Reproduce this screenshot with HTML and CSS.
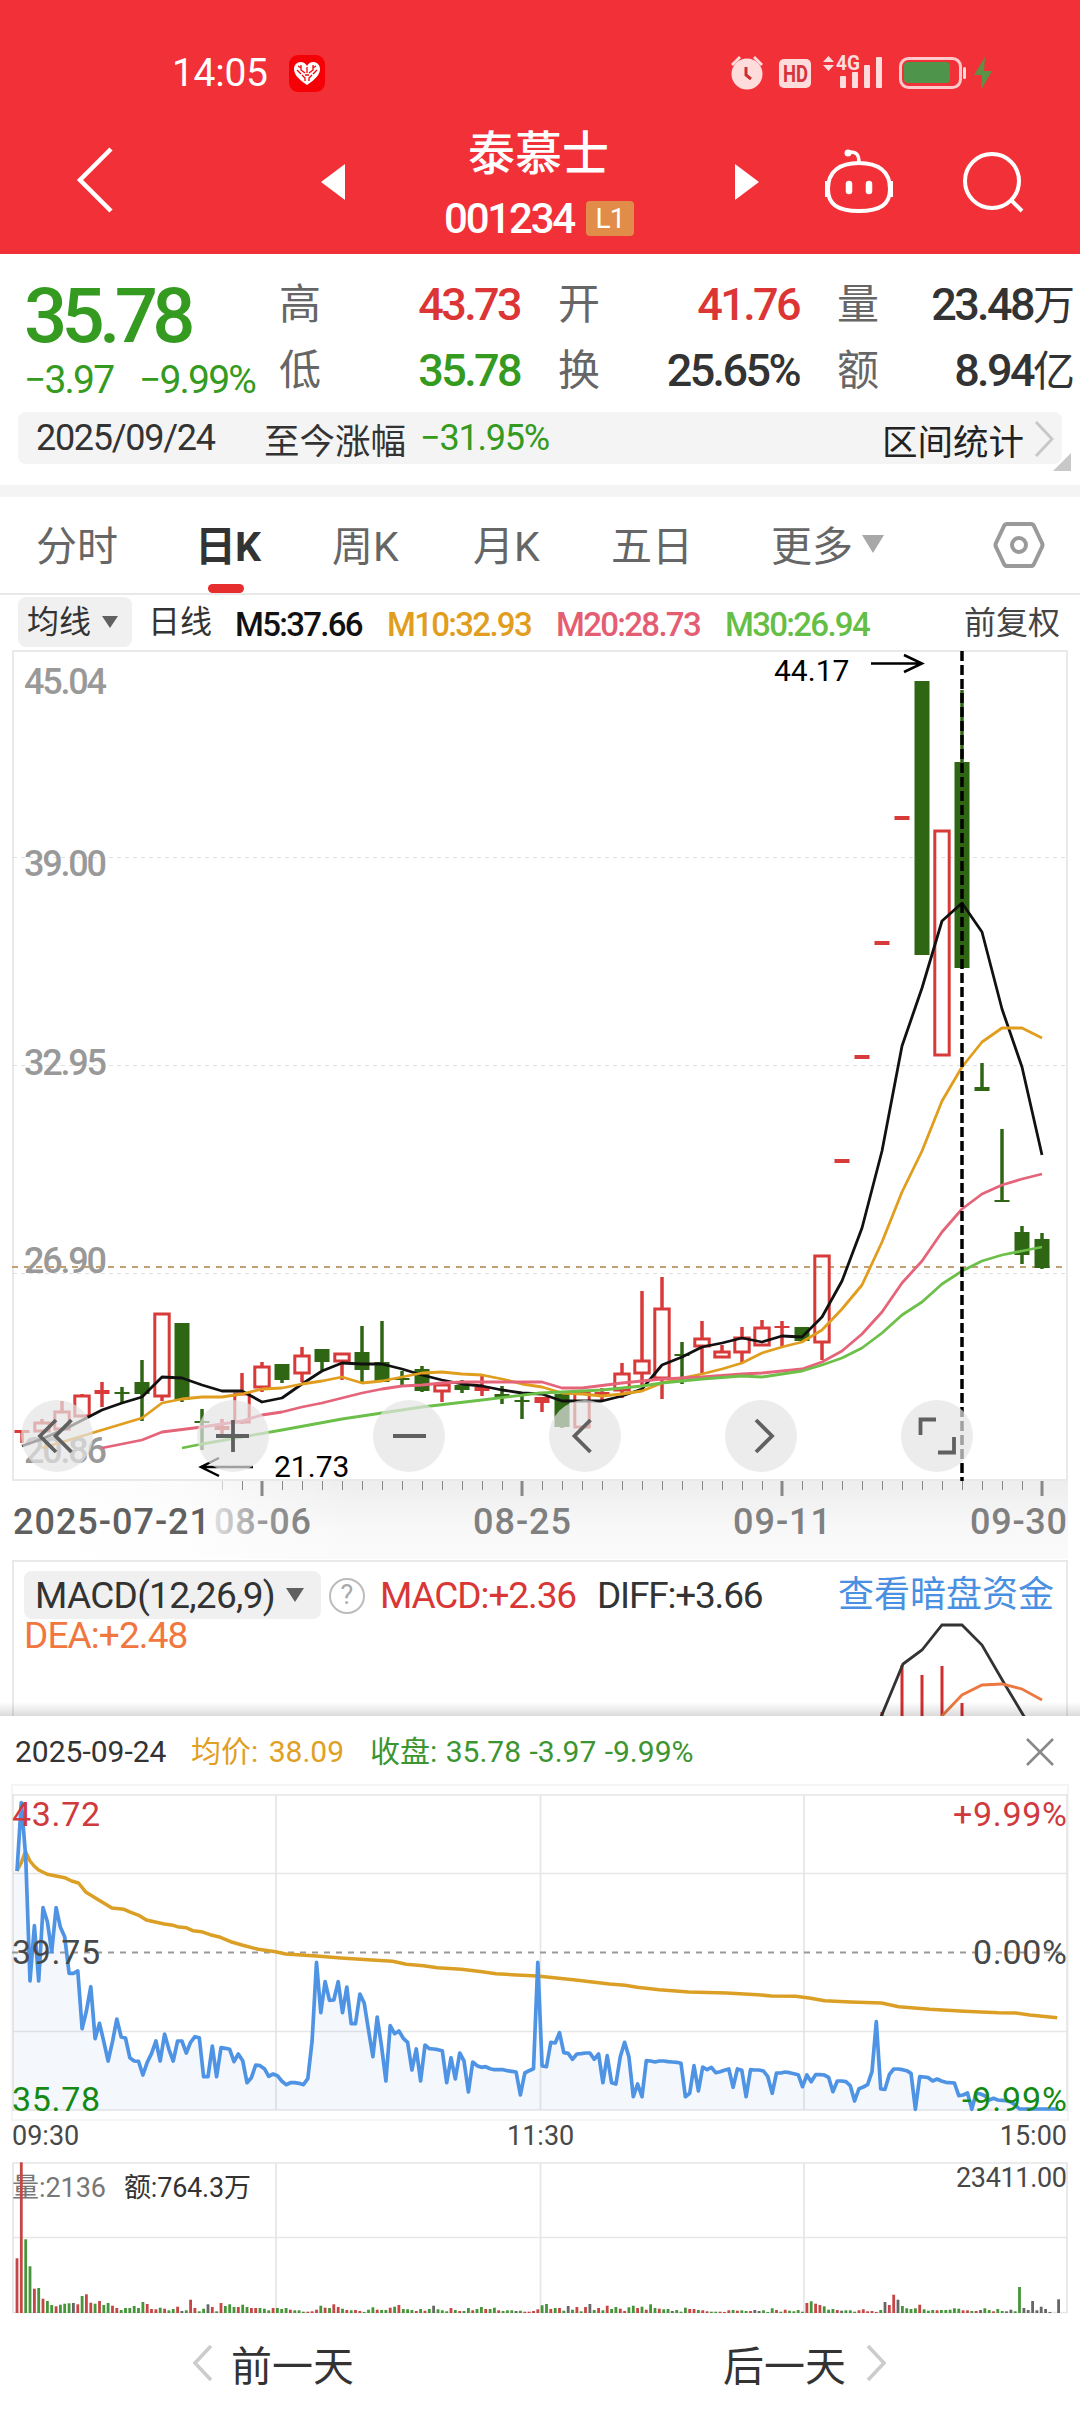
FILE: index.html
```html
<!DOCTYPE html>
<html lang="zh-CN">
<head>
    <meta charset="utf-8">
    <title>泰慕士 001234</title>
    <link rel="stylesheet" href="styles.css">
</head>
<body>
    <header class="header">
        <div class="status">
            <span class="clock">14:05</span>
            <svg class="app-icon" width="36" height="37" viewBox="0 0 36 37">
                <rect width="36" height="37" rx="9" fill="#f60008"/>
                <path d="M18 30C9 24 5 19 5 14c0-4 3-7 6.500-7 3 0 5 1.500 6.500 4 1.500-2.500 3.500-4 6.500-4C28 7 31 10 31 14c0 5-4 10-13 16z" fill="#fff"/>
                <path d="M18 12v6M12 10v5l4 3M24 10v5l-4 3M8 15l4 4M28 15l-4 4M13 20l3 3v3M23 20l-3 3v3M16 20h4M9 11l3 2M27 11l-3 2" stroke="#f60008" stroke-width="1.300" fill="none"/>
            </svg>
            <svg class="status-icons" width="270" height="40" viewBox="728 54 270 40">
                <g fill="#ffdcdc">
                    <circle cx="747" cy="75" r="15.500"/>
                    <path d="M731 65l8-8 2 2-8 8zM763 65l-8-8-2 2 8 8z"/>
                    <rect x="779" y="60" width="32" height="29" rx="5"/>
                    <path d="M823 63l5.500-6 5.500 6zM823 66l5.500 6 5.500-6z"/>
                    <rect x="840" y="77" width="6" height="12" rx="1"/>
                    <rect x="852" y="73" width="6" height="16" rx="1"/>
                    <rect x="864" y="66" width="6" height="23" rx="1"/>
                    <rect x="876" y="58" width="6" height="31" rx="1"/>
                    <rect x="963" y="68" width="3" height="12" rx="1.500"/>
                    <text x="836" y="71" font-size="20" font-weight="700" textLength="24" lengthAdjust="spacingAndGlyphs">4G</text>
                </g>
                <path d="M746 68v8l5 4" stroke="#c9302f" stroke-width="3" fill="none"/>
                <text x="783" y="83" font-size="23" font-weight="700" fill="#d5343a" textLength="25" lengthAdjust="spacingAndGlyphs">HD</text>
                <rect x="900.500" y="59.500" width="60" height="29" rx="8" fill="none" stroke="#ffc9cb" stroke-width="3"/>
                <rect x="904" y="63" width="46" height="21" rx="4" fill="#4e944a"/>
                <path d="M985 58l-11 18h8l-1 15 11-19h-8z" fill="#5f9048"/>
            </svg>
        </div>
        <div class="title-bar">
            <svg class="back" width="40" height="70" viewBox="0 0 40 70"><path d="M36 4L5 35l31 31" fill="none" stroke="#fff" stroke-width="4.500"/></svg>
            <svg class="prev" width="24" height="36" viewBox="0 0 24 36"><path d="M0 18L24 0v36z" fill="#fff"/></svg>
            <div class="stock">
                <div class="stock-name">泰慕士</div>
                <div class="stock-code"><span>001234</span><i class="level">L1</i></div>
            </div>
            <svg class="next" width="24" height="36" viewBox="0 0 24 36"><path d="M24 18L0 0v36z" fill="#fff"/></svg>
            <svg class="robot" width="76" height="68" viewBox="823 150 76 68" fill="none" stroke="#fff" stroke-width="4">
                <path d="M861 166c19 0 31 8 31 26 0 15-9 22-31 22s-31-7-31-22c0-18 12-26 31-26z"/>
                <path d="M861 166c0-8-2-11-9-11" stroke-width="3.500"/>
                <circle cx="850" cy="156" r="3.500" fill="#fff" stroke="none"/>
                <path d="M828.500 184v16M893.500 184v16" stroke-width="3"/>
                <path d="M851 187v7M871 187v7" stroke-width="6.500" stroke-linecap="round"/>
            </svg>
            <svg class="search" width="64" height="64" viewBox="964 152 64 64" fill="none" stroke="#fff" stroke-width="4">
                <circle cx="994" cy="184" r="27"/><path d="M1013 203l11 11"/>
            </svg>
        </div>
    </header>

    <section class="quote">
        <div class="quote-main">
            <div class="price">35.78</div>
            <div class="change"><span>−3.97</span><span>−9.99%</span></div>
        </div>
        <dl class="grid">
            <dt>高</dt><dd class="up">43.73</dd><dt>开</dt><dd class="up">41.76</dd><dt>量</dt><dd class="wide">23.48<b>万</b></dd>
            <dt>低</dt><dd class="down">35.78</dd><dt>换</dt><dd>25.65%</dd><dt>额</dt><dd class="wide">8.94<b>亿</b></dd>
        </dl>
    </section>

    <section class="range">
        <span class="range-date">2025/09/24</span>
        <span class="range-label">至今涨幅</span>
        <span class="range-value">−31.95%</span>
        <span class="range-link">区间统计</span>
        <svg width="20" height="38" viewBox="0 0 20 38"><path d="M2 2l16 17L2 36" fill="none" stroke="#c8c8c8" stroke-width="3"/></svg>
        <i class="corner"></i>
    </section>

    <nav class="tabs">
        <span class="tab t1">分时</span>
        <span class="tab t2 active">日K</span>
        <span class="tab t3">周K</span>
        <span class="tab t4">月K</span>
        <span class="tab t5">五日</span>
        <span class="tab t6">更多<i class="caret"></i></span>
        <svg class="setting" width="52" height="48" viewBox="0 0 52 48" fill="none" stroke="#9a9a9a" stroke-width="4">
            <path d="M14 3h24q2 0 3 2l8 17q1 2 0 4l-8 17q-1 2-3 2H14q-2 0-3-2L3 26q-1-2 0-4l8-17q1-2 3-2z"/><circle cx="26" cy="24" r="7"/>
        </svg>
    </nav>

    <div class="ma-row">
        <span class="select ma-select">均线<i class="caret dark"></i></span>
        <span class="ma-day">日线</span>
        <span class="ma m5">M5:37.66</span>
        <span class="ma m10">M10:32.93</span>
        <span class="ma m20">M20:28.73</span>
        <span class="ma m30">M30:26.94</span>
        <span class="adjust">前复权</span>
    </div>

    <svg class="kline" width="1080" height="910" viewBox="0 650 1080 910">
        <defs>
            <linearGradient id="strip" x1="0" y1="0" x2="0" y2="1">
                <stop offset="0" stop-color="#ededed"/><stop offset=".6" stop-color="#f8f8f8"/><stop offset="1" stop-color="#fafafa"/>
            </linearGradient>
            <linearGradient id="stripLeft" x1="0" y1="0" x2="1" y2="0">
                <stop offset="0" stop-color="#fff"/><stop offset=".5" stop-color="#fff" stop-opacity=".8"/><stop offset="1" stop-color="#fff" stop-opacity="0"/>
            </linearGradient>
            <linearGradient id="fade" x1="0" y1="0" x2="1" y2="0">
                <stop offset="0" stop-color="#e0e0e0"/><stop offset=".5" stop-color="#999"/><stop offset="1" stop-color="#808080"/>
            </linearGradient>
        </defs>
        <rect x="12" y="1481" width="1056" height="78" fill="url(#strip)"/>
        <rect x="12" y="1481" width="340" height="78" fill="url(#stripLeft)"/>
        <rect x="13" y="651" width="1054" height="829" fill="none" stroke="#e9e9e9" stroke-width="2"/>
        <path d="M13 857.500H1067M13 1065.500H1067M13 1273.500H1067" stroke="#e0e0e0" stroke-dasharray="4 4"/>
        <g class="axis">
            <text x="24" y="694" textLength="83">45.04</text>
            <text x="24" y="876" textLength="83">39.00</text>
            <text x="24" y="1075" textLength="83">32.95</text>
            <text x="24" y="1273" textLength="83">26.90</text>
            <text x="24" y="1463" textLength="83">20.86</text>
        </g>
        <path d="M12 1267H1068" stroke="#c2a074" stroke-width="2" stroke-dasharray="6 6"/>
        <g id="candles"></g>
        <g fill="none" stroke-width="2.800" stroke-linejoin="round">
            <polyline stroke="#111" points="22,1446 42,1439 69,1427 102,1410 122,1403 142,1397 162,1377 182,1378 202,1385 222,1391 242,1391 262,1402 282,1398 302,1384 322,1371 342,1363 362,1364 382,1364 402,1369 422,1375 442,1380 462,1384 482,1386 502,1390 522,1393 542,1394 562,1401 582,1401 602,1401 622,1396 642,1389 662,1365 682,1357 702,1347 722,1343 742,1338 762,1342 782,1336 802,1337 822,1317 842,1281 862,1228 882,1151 902,1046 922,988 942,921 962,903 982,932 1002,1009 1022,1067 1042,1155"/>
            <polyline stroke="#e09d1e" points="42,1448 62,1442 102,1430 122,1424 142,1418 162,1403 182,1399 202,1397 222,1397 242,1394 262,1389 282,1388 302,1384 322,1381 342,1377 362,1383 382,1381 402,1377 422,1373 442,1372 462,1374 482,1375 502,1379 522,1384 542,1387 562,1393 582,1394 602,1396 622,1394 642,1391 662,1383 682,1378 702,1374 722,1369 742,1363 762,1353 782,1347 802,1342 822,1330 842,1309 862,1285 882,1242 902,1192 922,1151 942,1101 962,1067 982,1042 1002,1028 1022,1028 1042,1038"/>
            <polyline stroke="#e5647a" points="102,1448 142,1440 162,1432 202,1427 242,1421 262,1415 282,1412 302,1407 322,1403 342,1398 362,1393 382,1389 402,1386 422,1385 442,1383 462,1382 542,1382 562,1388 582,1388 622,1383 662,1379 702,1377 742,1374 762,1373 802,1369 822,1362 842,1351 862,1334 882,1312 902,1283 922,1261 942,1232 962,1209 982,1194 1002,1185 1022,1179 1042,1174"/>
            <polyline stroke="#6cc04a" points="182,1448 202,1444 282,1430 342,1419 382,1413 422,1407 482,1400 540,1393 562,1392 602,1390 642,1386 662,1383 702,1379 742,1376 762,1377 802,1371 822,1365 842,1358 862,1348 882,1333 902,1315 922,1302 942,1284 962,1271 982,1261 1002,1255 1022,1251 1042,1247"/>
        </g>
        <g fill="none" stroke="#000" stroke-width="2.500">
            <path d="M871 663.500H921M904 655l18 8.500-18 8.500"/>
            <path d="M253 1467H202M219 1458l-18 9 18 9"/>
            <path d="M962 651V1481" stroke-width="3.500" stroke-dasharray="10 4"/>
        </g>
        <text x="774" y="681" font-size="30">44.17</text>
        <text x="274" y="1477" font-size="30">21.73</text>
        <g id="ticks"></g>
        <g class="dates">
            <text x="13" y="1534" textLength="197" fill="#606060">2025-07-21</text>
            <text x="214" y="1534" textLength="97" fill="url(#fade)">08-06</text>
            <text x="473" y="1534" textLength="98">08-25</text>
            <text x="733" y="1534" textLength="98">09-11</text>
            <text x="970" y="1534" textLength="97">09-30</text>
        </g>
        <g fill="#e4e4e4" fill-opacity=".7">
            <circle cx="57" cy="1436" r="36"/><circle cx="233" cy="1436" r="36"/><circle cx="409" cy="1436" r="36"/>
            <circle cx="585" cy="1436" r="36"/><circle cx="761" cy="1436" r="36"/><circle cx="937" cy="1436" r="36"/>
        </g>
        <g fill="none" stroke="#606060" stroke-width="3.800">
            <path d="M56 1420l-16 16 16 16M71.500 1420l-16 16 16 16"/>
            <path d="M216 1436h33M233 1420v32M393 1436h33"/>
            <path d="M590.500 1420l-16 16 16 16M756 1420l16 16-16 16"/>
            <path d="M936 1419.500h-15.500V1435M954 1437v15.500h-16"/>
        </g>
    </svg>

    <section class="macd">
        <div class="macd-row">
            <span class="select macd-select">MACD(12,26,9)<i class="caret dark"></i></span>
            <i class="help">?</i>
            <span class="macd-val">MACD:+2.36</span>
            <span class="diff-val">DIFF:+3.66</span>
            <span class="fund-link">查看暗盘资金</span>
        </div>
        <div class="dea-val">DEA:+2.48</div>
        <svg class="macd-chart" width="200" height="96" viewBox="868 1620 200 96" fill="none" stroke-width="2.800">
            <path d="M882 1712V1716M902 1665V1716M922 1675V1716M942 1666V1716M962 1703V1716" stroke="#d02f2f" stroke-width="3"/>
            <polyline stroke="#333" points="881,1717 903,1664 922,1650 942,1625 962,1625 982,1645 1004,1683 1025,1718"/>
            <polyline stroke="#ec7840" points="941,1717 962,1695 982,1685 1002,1684 1022,1689 1042,1700"/>
        </svg>
    </section>

    <section class="panel">
        <div class="panel-head">
            <span class="p-date">2025-09-24</span>
            <span class="p-avg">均价: 38.09</span>
            <span class="p-close">收盘: 35.78 -3.97 -9.99%</span>
            <svg width="28" height="28" viewBox="0 0 28 28"><path d="M1 1l26 26M27 1L1 27" stroke="#888" stroke-width="2.500"/></svg>
        </div>
        <svg class="minute" width="1080" height="540" viewBox="0 1780 1080 540">
            <rect x="12" y="1785" width="1056" height="335" fill="none" stroke="#f5f5f5" stroke-width="2"/>
            <path d="M12 1795H1068M12 2110H1068M13 1794V2111M1067 1794V2111M276 1795V2110M540.500 1795V2110M804 1795V2110M12 1873.500H1068M12 2031.500H1068" stroke="#e6e6e6" stroke-width="1.700"/>
            <path d="M12 1952.500H1068" stroke="#999" stroke-width="2" stroke-dasharray="6 6"/>
            <polyline id="avg" fill="none" stroke="#dc9f25" stroke-width="3.500" stroke-linejoin="round"/>
            <path id="area" fill="#4a90e2" fill-opacity=".06"/>
            <polyline id="line" fill="none" stroke="#4f94e4" stroke-width="3.700" stroke-linejoin="round"/>
            <g font-size="34">
                <text x="12" y="1826" fill="#cf3a3f" textLength="88">43.72</text>
                <text x="12" y="1964" fill="#484848" textLength="88">39.75</text>
                <text x="12" y="2111" fill="#148a14" textLength="88">35.78</text>
                <text x="953" y="1826" fill="#cf3a3f" textLength="114">+9.99%</text>
                <text x="973" y="1964" fill="#484848" textLength="94">0.00%</text>
                <text x="962" y="2111" fill="#148a14" textLength="105">-9.99%</text>
            </g>
            <g font-size="27" fill="#484848">
                <text x="12" y="2145">09:30</text>
                <text x="507" y="2145">11:30</text>
                <text x="1067" y="2145" text-anchor="end">15:00</text>
                <text x="956" y="2187" textLength="111">23411.00</text>
            </g>
            <path d="M12 2163H1068M13 2163V2313M1067 2163V2313M276 2163V2313M540.500 2163V2313M804 2163V2313M12 2237.500H1068M12 2312.500H1068" stroke="#e6e6e6" stroke-width="1.700"/>
            <g font-size="27">
                <text x="12" y="2197" fill="#777" textLength="94">量:2136</text>
                <text x="124" y="2197" fill="#333" textLength="127">额:764.3万</text>
            </g>
            <g id="volume"></g>
        </svg>
        <div class="pager">
            <svg width="20" height="38" viewBox="0 0 20 38"><path d="M18 2L2 19l16 17" fill="none" stroke="#ccc" stroke-width="3.500"/></svg>
            <span class="day-prev">前一天</span>
            <span class="day-next">后一天</span>
            <svg width="20" height="38" viewBox="0 0 20 38"><path d="M2 2l16 17L2 36" fill="none" stroke="#ccc" stroke-width="3.500"/></svg>
        </div>
    </section>
    <script src="chart.js"></script>
</body>
</html>
```
FILE: styles.css
```css
body { margin: 0; width: 1080px; height: 2411px; overflow: hidden; background: #fff; color: #333; font-family: Roboto, "Noto Sans CJK SC", sans-serif; }
svg { display: block; flex: none; }
svg text { font-family: Roboto, "Noto Sans CJK SC", sans-serif; }
i, b { font-style: normal; font-weight: inherit; }
span { white-space: nowrap; }

.header { height: 254px; background: #f13037; color: #fff; }
.status { display: flex; height: 40px; padding: 54px 82px 0 172px; }
.clock { width: 117px; font-size: 39px; line-height: 39px; letter-spacing: -.3px; }
.app-icon { margin-top: 1px; }
.status-icons { margin-left: auto; margin-top: -1px; }
.title-bar { display: flex; height: 160px; }
.back { margin: 51px 0 0 75px; }
.prev { margin: 70px 0 0 206px; }
.next { margin: 70px 0 0 0; }
.stock { width: 390px; text-align: center; }
.stock-name { margin-top: 34px; padding-right: 3px; font-size: 47px; line-height: 52px; font-weight: 500; }
.stock-code { display: flex; align-items: center; margin: 16px 0 0 99px; height: 44px; font-size: 42px; font-weight: 500; letter-spacing: -2.2px; }
.level { margin-left: 12px; width: 48px; height: 35px; border-radius: 4px; background: #e18c49; font-size: 28px; line-height: 35px; font-weight: 400; letter-spacing: -1px; }
.robot { margin: 53px 0 0 62px; }
.search { margin: 55px 0 0 65px; }

.quote { display: flex; height: 158px; }
.quote-main { width: 280px; padding-left: 24px; box-sizing: border-box; color: #349a20; }
.price { margin-top: 18px; height: 82px; font-size: 76px; line-height: 88px; font-weight: 500; letter-spacing: -5.6px; }
.change { display: flex; margin-top: 4px; font-size: 39px; line-height: 44px; letter-spacing: -1.8px; }
.change span { width: 115px; }
.grid { display: grid; grid-template-columns: 46px 195px 84px 195px 85px 191px; grid-template-rows: 66px 66px; margin: 18px 0 0 -1px; align-content: start; }
.grid dt { color: #666; font-size: 42px; line-height: 66px; }
.grid dt:nth-of-type(3n+2), .grid dt:nth-of-type(3n) { padding-left: 38px; }
.grid dd { margin: 0; text-align: right; font-size: 45px; line-height: 66px; font-weight: 500; letter-spacing: -2.6px; white-space: nowrap; }
.grid b { font-size: 42px; font-weight: 400; letter-spacing: 0; }
.grid .up { color: #dc3535; }
.grid .down { color: #349a20; }

.range { position: relative; display: flex; align-items: center; margin: 0 18px; height: 52px; border-radius: 8px; background: #f4f4f4; font-size: 36px; }
.range-date { width: 228px; padding-left: 18px; letter-spacing: -1.3px; }
.range-label { width: 156px; font-size: 35.5px; }
.range-value { color: #349a20; letter-spacing: -1.2px; }
.range-link { margin: 2px 10px 0 auto; font-size: 35.5px; color: #222; }
.range svg { margin: 2px 8px 0 0; }
.corner { position: absolute; right: -9px; top: 41px; border-left: 18px solid transparent; border-bottom: 18px solid #c8c8c8; }

.tabs { display: flex; margin-top: 21px; border-top: 12px solid #f4f4f4; border-bottom: 2px solid #e8e8e8; box-sizing: border-box; height: 110px; font-size: 41px; line-height: 100px; color: #666; }
.tab { position: relative; }
.t1 { width: 159px; padding-left: 36px; }
.t2 { width: 137px; }
.t3 { width: 141px; }
.t4 { width: 138px; }
.t5 { width: 160px; }
.t6 { width: 222px; }
.active { color: #333; font-weight: 700; letter-spacing: -1px; }
.active::after { content: ""; position: absolute; left: 13px; top: 87px; width: 36px; height: 9px; border-radius: 5px; background: #e62e2e; }
.caret { display: inline-block; margin-left: 9px; vertical-align: 8px; border: 11px solid transparent; border-top: 18px solid #a8a8a8; border-bottom: 0; }
.caret.dark { border-width: 12px 8px 0; border-top-color: #606060; vertical-align: 6px; }
.setting { margin-top: 24px; }

.ma-row { display: flex; height: 55px; padding-left: 18px; line-height: 51px; font-size: 33px; }
.select { box-sizing: border-box; border-radius: 8px; background: #f0f0f0; }
.ma-select { margin-top: 2px; width: 114px; height: 50px; padding-left: 9px; font-size: 32px; }
.ma-select .caret { margin-left: 11px; vertical-align: 5px; }
.ma-day { margin: 2px 0 0 16px; width: 87px; font-size: 32px; }
.ma { margin-top: 4px; width: 169px; font-weight: 500; letter-spacing: -1.7px; }
.m5 { width: 152px; color: #111; }
.m10 { color: #e09d1e; }
.m20 { color: #e45d72; }
.m30 { color: #65be46; }
.adjust { margin: 3px 20px 0 auto; font-size: 32px; color: #444; }

.axis { fill: #999; font-size: 36px; font-weight: 500; }
.dates { fill: #808080; font-size: 36px; font-weight: 500; }

.macd { position: relative; height: 156px; margin: 0 12px; border: 2px solid #e9e9e9; border-bottom: 0; box-sizing: border-box; font-size: 37px; }
.macd::after { content: ""; position: absolute; left: -14px; right: -14px; bottom: 0; height: 14px; background: linear-gradient(rgba(0,0,0,0), rgba(0,0,0,.14)); }
.macd-row { display: flex; padding: 9px 12px 0 10px; height: 48px; line-height: 49px; }
.macd-select { width: 297px; padding-left: 11px; letter-spacing: -.7px; }
.macd-select .caret { border-width: 14px 9px 0; margin-left: 11px; }
.help { box-sizing: border-box; margin: 7px 0 0 8px; width: 36px; height: 36px; border: 2.5px solid #bcbcbc; border-radius: 50%; color: #aaa; font-size: 27px; line-height: 31px; text-align: center; }
.macd-val { margin-left: 15px; width: 217px; color: #d93636; letter-spacing: -1.1px; }
.diff-val { letter-spacing: -1.2px; }
.fund-link { margin-left: auto; color: #4a90e2; font-size: 36px; }
.dea-val { margin-left: 10px; line-height: 34px; color: #f07840; letter-spacing: -.9px; }
.macd-chart { position: absolute; right: -2px; bottom: 0; }

.panel { background: #fff; }
.panel-head { display: flex; align-items: center; height: 64px; padding: 0 26px 0 15px; font-size: 30px; line-height: 44px; }
.panel-head svg { margin: 7px 0 0 auto; }
.panel-head span { padding-top: 7px; }
.p-date { width: 176px; }
.p-avg { width: 179px; color: #dfa024; word-spacing: 3px; }
.p-close { color: #3c9530; word-spacing: 1px; }
.pager { display: flex; align-items: center; height: 86px; padding-left: 193px; font-size: 41px; }
.pager .day-prev { margin-left: 18px; width: 492px; }
.pager .day-next { width: 143px; }
```
FILE: chart.js
```js
var NS = 'http://www.w3.org/2000/svg';

function add(parent, tag, attrs) {
    var el = document.createElementNS(NS, tag);
    for (var k in attrs) el.setAttribute(k, attrs[k]);
    parent.appendChild(el);
}

// high, body top, body bottom, low, type (r hollow, c red solid, g green)
var candles = [
    [1430,1430,1433,1443,'c'],[1419,1423,1431,1431,'r'],[1401,1412,1429,1429,'r'],[1394,1396,1416,1417,'r'],[1382,1390,1394,1407,'c'],
    [1387,1392,1394,1403,'g'],[1360,1382,1394,1421,'g'],[1314,1314,1396,1401,'r'],[1323,1323,1400,1402,'g'],[1409,1421,1423,1450,'g'],
    [1419,1426,1430,1438,'c'],[1373,1394,1422,1424,'r'],[1362,1367,1387,1392,'r'],[1364,1364,1380,1383,'g'],[1347,1356,1373,1382,'r'],
    [1349,1349,1362,1370,'g'],[1354,1354,1361,1380,'r'],[1326,1352,1370,1382,'g'],[1321,1362,1382,1382,'g'],[1371,1378,1380,1386,'g'],
    [1366,1369,1391,1392,'g'],[1385,1385,1391,1402,'r'],[1380,1385,1390,1393,'g'],[1376,1387,1391,1396,'c'],[1386,1394,1397,1404,'g'],
    [1393,1400,1402,1419,'g'],[1397,1397,1403,1412,'c'],[1394,1394,1427,1428,'g'],[1393,1393,1427,1427,'r'],[1388,1392,1395,1402,'c'],
    [1363,1374,1390,1398,'r'],[1291,1361,1373,1385,'r'],[1277,1309,1378,1399,'r'],[1342,1354,1356,1384,'g'],[1321,1339,1346,1373,'r'],
    [1345,1352,1357,1357,'r'],[1327,1338,1352,1363,'r'],[1320,1328,1345,1345,'r'],[1321,1326,1328,1346,'c'],[1327,1327,1341,1341,'g'],
    [1256,1256,1342,1360,'r'],[1159,1159,1163,1163,'c'],[1055,1055,1059,1059,'c'],[941,941,945,945,'c'],[816,816,820,820,'c'],
    [681,681,955,955,'g'],[831,831,1055,1055,'r'],[690,762,968,968,'g'],[1063,1087,1091,1091,'g'],[1129,1200,1202,1202,'g'],
    [1226,1232,1255,1264,'g'],[1233,1239,1268,1269,'g']
];
var box = document.getElementById('candles');
candles.forEach(function (c, i) {
    var x = 22 + 20 * i, red = c[4] != 'g', col = red ? '#d83a3a' : '#2f6614';
    if (c[1] > c[0]) add(box, 'rect', { x: x - 1.75, y: c[0], width: 3.5, height: c[1] - c[0], fill: col });
    if (c[3] > c[2]) add(box, 'rect', { x: x - 1.75, y: c[2], width: 3.5, height: c[3] - c[2], fill: col });
    if (c[4] == 'r') add(box, 'rect', { x: x - 7.2, y: c[1], width: 14.4, height: c[2] - c[1], fill: 'none', stroke: col, 'stroke-width': 3 });
    else add(box, 'rect', { x: x - 7.5, y: c[1], width: 15, height: c[2] - c[1], fill: col });
});

var ticks = document.getElementById('ticks');
for (var i = 10; i < 52; i++) {
    var major = [12, 25, 38, 51].indexOf(i) >= 0;
    add(ticks, 'rect', { x: 22 + 20 * i - (major ? 1.5 : 0), y: 1481, width: major ? 3 : 1, height: major ? 15 : 9, fill: i < 11 ? '#ccc' : '#888' });
}

// one value per minute
var price = [273,68,230,603,437,603,383,425,515,383,442,470,580,580,573,746,693,620,776,730,785,843,785,717,771,774,833,843,844,885,
    847,821,783,843,762,808,843,783,783,819,787,770,773,890,890,798,890,803,805,808,845,822,842,908,893,855,857,866,889,882,
    887,903,914,908,908,910,914,896,783,547,698,605,661,660,605,698,621,731,731,642,669,750,830,711,800,903,737,761,753,775,
    787,870,807,903,795,806,807,809,812,908,833,897,819,843,936,846,857,862,860,866,869,869,869,872,874,876,945,879,872,866,
    547,858,860,787,789,758,818,820,838,822,821,819,819,838,822,908,827,908,912,830,787,830,950,912,950,842,843,846,843,843,
    845,846,847,850,950,940,857,933,861,869,862,878,875,871,867,922,867,871,950,869,870,870,873,890,940,879,879,876,878,881,
    884,920,885,905,884,884,885,892,935,903,903,905,917,963,926,921,914,875,725,927,928,884,867,867,869,872,880,988,890,891,
    893,903,897,903,907,908,909,947,945,939,988,939,942,947,960,955,960,961,962,966,975,987,987,987,987,987,987,987,987,987,987];
var pts = price.map(function (v, i) { return (17 + 4.34 * i).toFixed(1) + ',' + (1780 + v / 3).toFixed(1); });
document.getElementById('line').setAttribute('points', pts.join(' '));
document.getElementById('area').setAttribute('d', 'M13,2110 L13,1871 L' + pts.join(' L') + ' L1058,2110 Z');

var avg = [49,273,61,250,74,215,87,243,99,258,112,270,137,283,188,293,208,303,228,309,250,337,290,362,325,384,360,388,380,397,403,406,
    425,420,477,432,503,436,515,440,540,443,560,452,585,455,610,464,640,472,670,485,705,496,750,508,800,515,830,522,919,528,990,534,
    1080,540,1140,544,1180,553,1230,557,1270,563,1340,568,1400,575,1440,581,1500,585,1560,588,1665,599,1720,606,1770,612,1815,616,
    1850,622,1915,629,2000,636,2110,639,2200,644,2240,648,2310,649,2350,654,2395,662,2470,666,2560,669,2610,680,2700,688,2800,694,
    2900,698,2950,699,2990,705,3070,713];
var a = [];
for (i = 0; i < avg.length; i += 2) a.push((avg[i] / 2.904).toFixed(1) + ',' + (1780 + avg[i + 1] / 3).toFixed(1));
document.getElementById('avg').setAttribute('points', a.join(' '));

// r up, g down, k flat
var vol = 'r164 r452 g221 g140 r73 g75 r43 g36 g24 r20 g25 g28 g29 k30 r26 g51 r56 r31 g28 r36 g24 g30 r22 r15 g9 g15 g15 g21 g15 g33 ' +
    'r27 r12 r11 g16 r13 g8 g12 r19 k6 g8 r40 r15 g5 g13 k26 r18 g5 r30 g21 g26 g18 r18 g25 g18 r15 r15 g15 g13 g8 r15 ' +
    'g15 g12 g15 r10 g8 g8 g4 r4 r5 r10 g22 r16 g15 r26 r18 g13 r9 g8 r9 r6 g3 g10 g17 r10 g9 g9 r16 g19 r24 g12 ' +
    'g11 g9 r6 g12 r7 g12 k22 g11 g8 g5 r15 g9 r6 g6 g15 r8 g12 g18 r12 g12 g16 r8 g6 g8 g8 k6 g7 r4 r4 r6 ' +
    'r11 g23 g27 r12 g15 r15 g7 k21 g10 r18 g5 r18 k27 g9 r15 g8 r22 g12 g18 r13 r6 g17 g22 r15 g19 r10 g26 g15 r13 g11 ' +
    'g12 k6 g9 g4 g16 r12 r12 g9 r8 r5 g4 g4 r4 r3 r8 g9 r7 g8 g6 r6 k9 k6 g8 g3 g14 r9 g4 r10 g7 g5 ' +
    'g9 g4 r30 g35 r28 r24 g20 g10 g12 r9 k7 g8 g8 g4 r8 r11 r5 r6 r3 g9 k33 r24 r55 k40 g21 g14 g12 g14 r25 g11 ' +
    'g7 g9 r8 g9 g9 g10 g14 g13 r8 r8 g6 r6 k9 g14 g9 r5 g12 g6 k5 k10 g5 g78 k15 k9 k36 k8 k19 k12 k3 k0 k41';
var color = { r: '#c64545', g: '#459638', k: '#666' };
var volume = document.getElementById('volume');
vol.split(' ').forEach(function (v, i) {
    var h = v.slice(1) / 3;
    add(volume, 'rect', { x: (15.6 + 4.34 * i).toFixed(1), y: (2313 - h).toFixed(1), width: 2.8, height: h.toFixed(1), fill: color[v[0]] });
});
```
